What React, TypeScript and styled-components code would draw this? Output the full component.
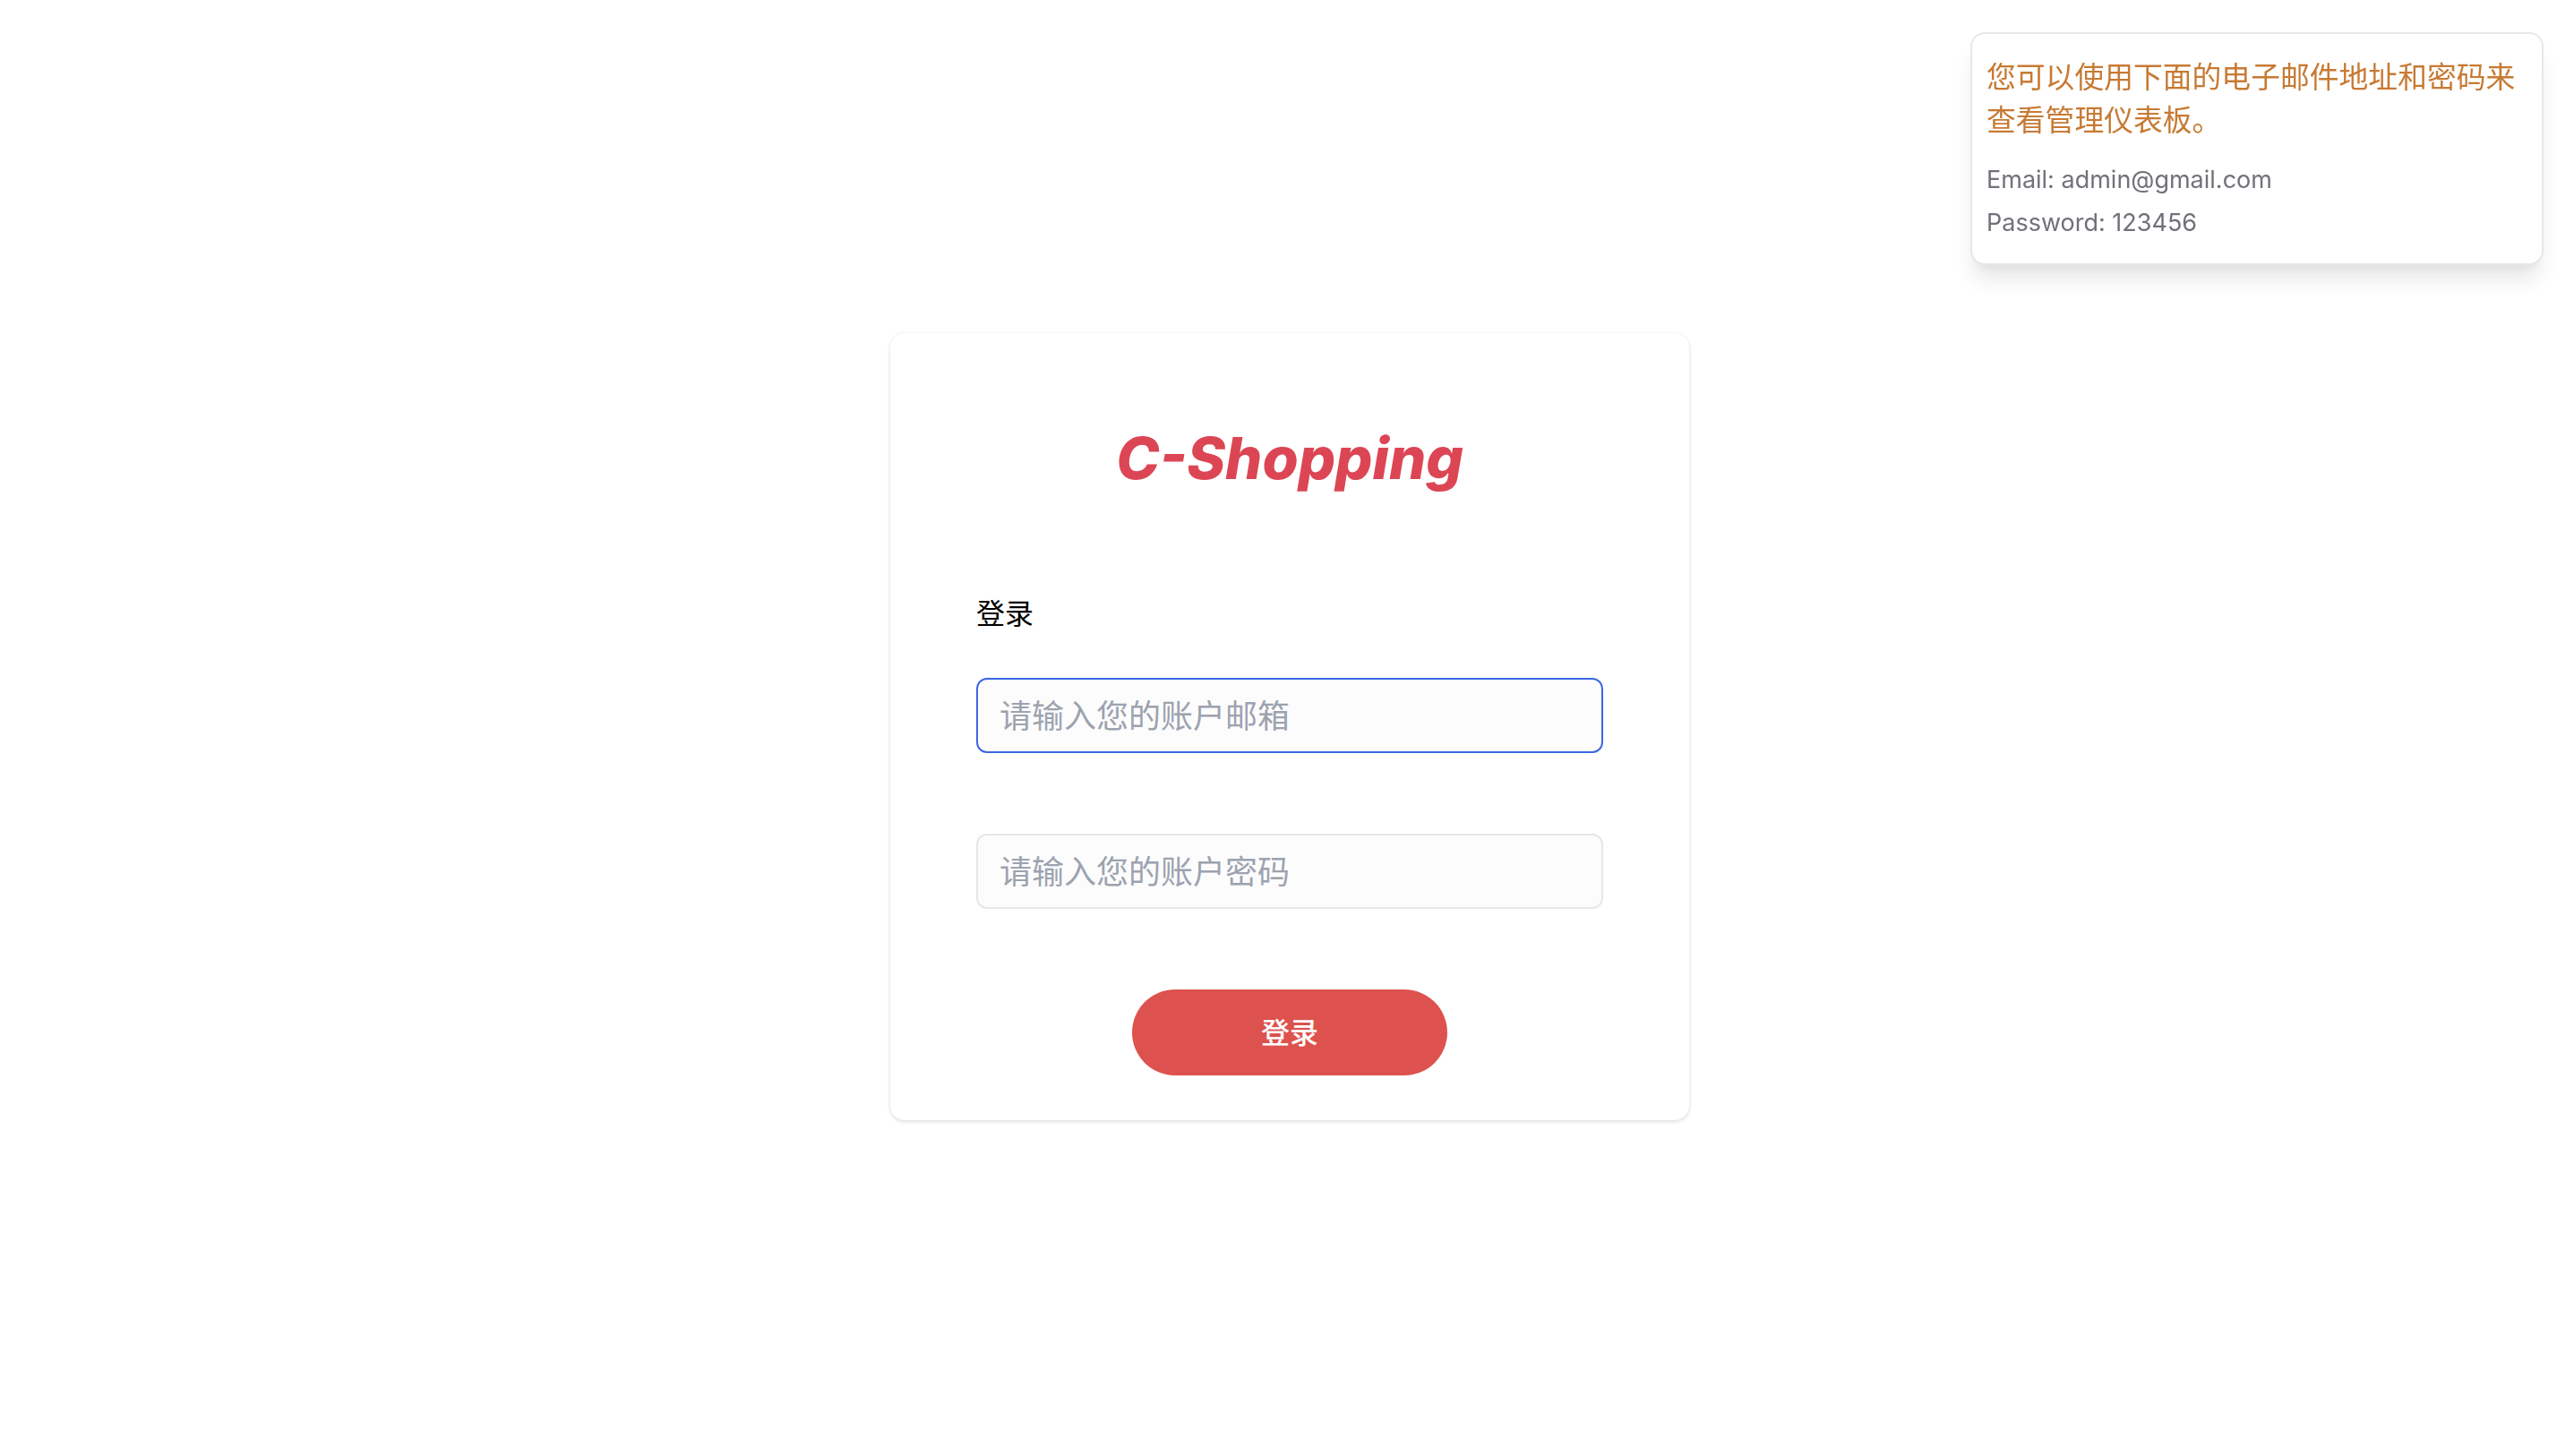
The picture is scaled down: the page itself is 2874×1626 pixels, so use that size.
import styled, { createGlobalStyle } from 'styled-components'

const GlobalStyle = createGlobalStyle`
  html, body {
    margin: 0;
    padding: 0;
    background: #fff;
  }
  body {
    font-family: Inter, "Noto Sans CJK SC", sans-serif;
  }
  * {
    box-sizing: border-box;
  }
`

const Page = styled.main`
  min-height: 100vh;
  display: flex;
  align-items: center;
  justify-content: center;
  padding: 0 0 3px 6px;
`

const Notice = styled.aside`
  position: fixed;
  top: 36px;
  right: 34px;
  width: 640px;
  padding: 24px 16px 21px;
  background: #fff;
  border: 2px solid #e5e7eb;
  border-radius: 16px;
  box-shadow: 0 20px 25px -5px rgba(0, 0, 0, 0.1), 0 10px 10px -5px rgba(0, 0, 0, 0.04);
`

const NoticeTitle = styled.p`
  margin: 0 0 19px;
  font-size: 32.8px;
  line-height: 48px;
  color: #c77a33;
`

const NoticeLine = styled.p`
  margin: 0;
  font-size: 27px;
  line-height: 48px;
  color: #71717a;
`

const Card = styled.section`
  width: 892px;
  padding: 104px 96px 50px;
  background: #fff;
  border-radius: 16px;
  box-shadow: 0 2px 4px rgba(0, 0, 0, 0.1), 0 0 4px rgba(0, 0, 0, 0.06);
`

const Logo = styled.h1`
  margin: 0 0 114px;
  font-size: 65px;
  font-style: italic;
  font-weight: 800;
  line-height: 72px;
  text-align: center;
  color: #dc4654;
`

const Heading = styled.h2`
  margin: 0 0 47px;
  font-size: 32px;
  font-weight: 400;
  line-height: 48px;
  color: #000;
`

const Form = styled.form`
  display: flex;
  flex-direction: column;
  gap: 90px;
`

const Input = styled.input<{ $focused?: boolean }>`
  display: block;
  width: 100%;
  height: 84px;
  padding: 2px 24px 0;
  font-family: inherit;
  font-size: 36px;
  background: #fcfcfd;
  border: 2px solid ${(p) => (p.$focused ? '#3b66e3' : '#e5e7eb')};
  border-radius: 12px;
  outline: none;

  &::placeholder {
    color: #9ca3af;
  }
`

const Submit = styled.button`
  align-self: center;
  width: 352px;
  height: 96px;
  padding: 0 0 4px;
  font-family: inherit;
  font-size: 32px;
  font-weight: 500;
  color: #fff;
  background: #dd524e;
  border: none;
  border-radius: 48px;
`

function App() {
  return (
    <>
      <GlobalStyle />
      <Page>
        <Card>
          <Logo>C-Shopping</Logo>
          <Heading>登录</Heading>
          <Form>
            <Input $focused type="text" placeholder="请输入您的账户邮箱" />
            <Input type="password" placeholder="请输入您的账户密码" />
            <Submit type="button">登录</Submit>
          </Form>
        </Card>
      </Page>
      <Notice>
        <NoticeTitle>您可以使用下面的电子邮件地址和密码来查看管理仪表板。</NoticeTitle>
        <NoticeLine>Email: admin@gmail.com</NoticeLine>
        <NoticeLine>Password: 123456</NoticeLine>
      </Notice>
    </>
  )
}

export default App
